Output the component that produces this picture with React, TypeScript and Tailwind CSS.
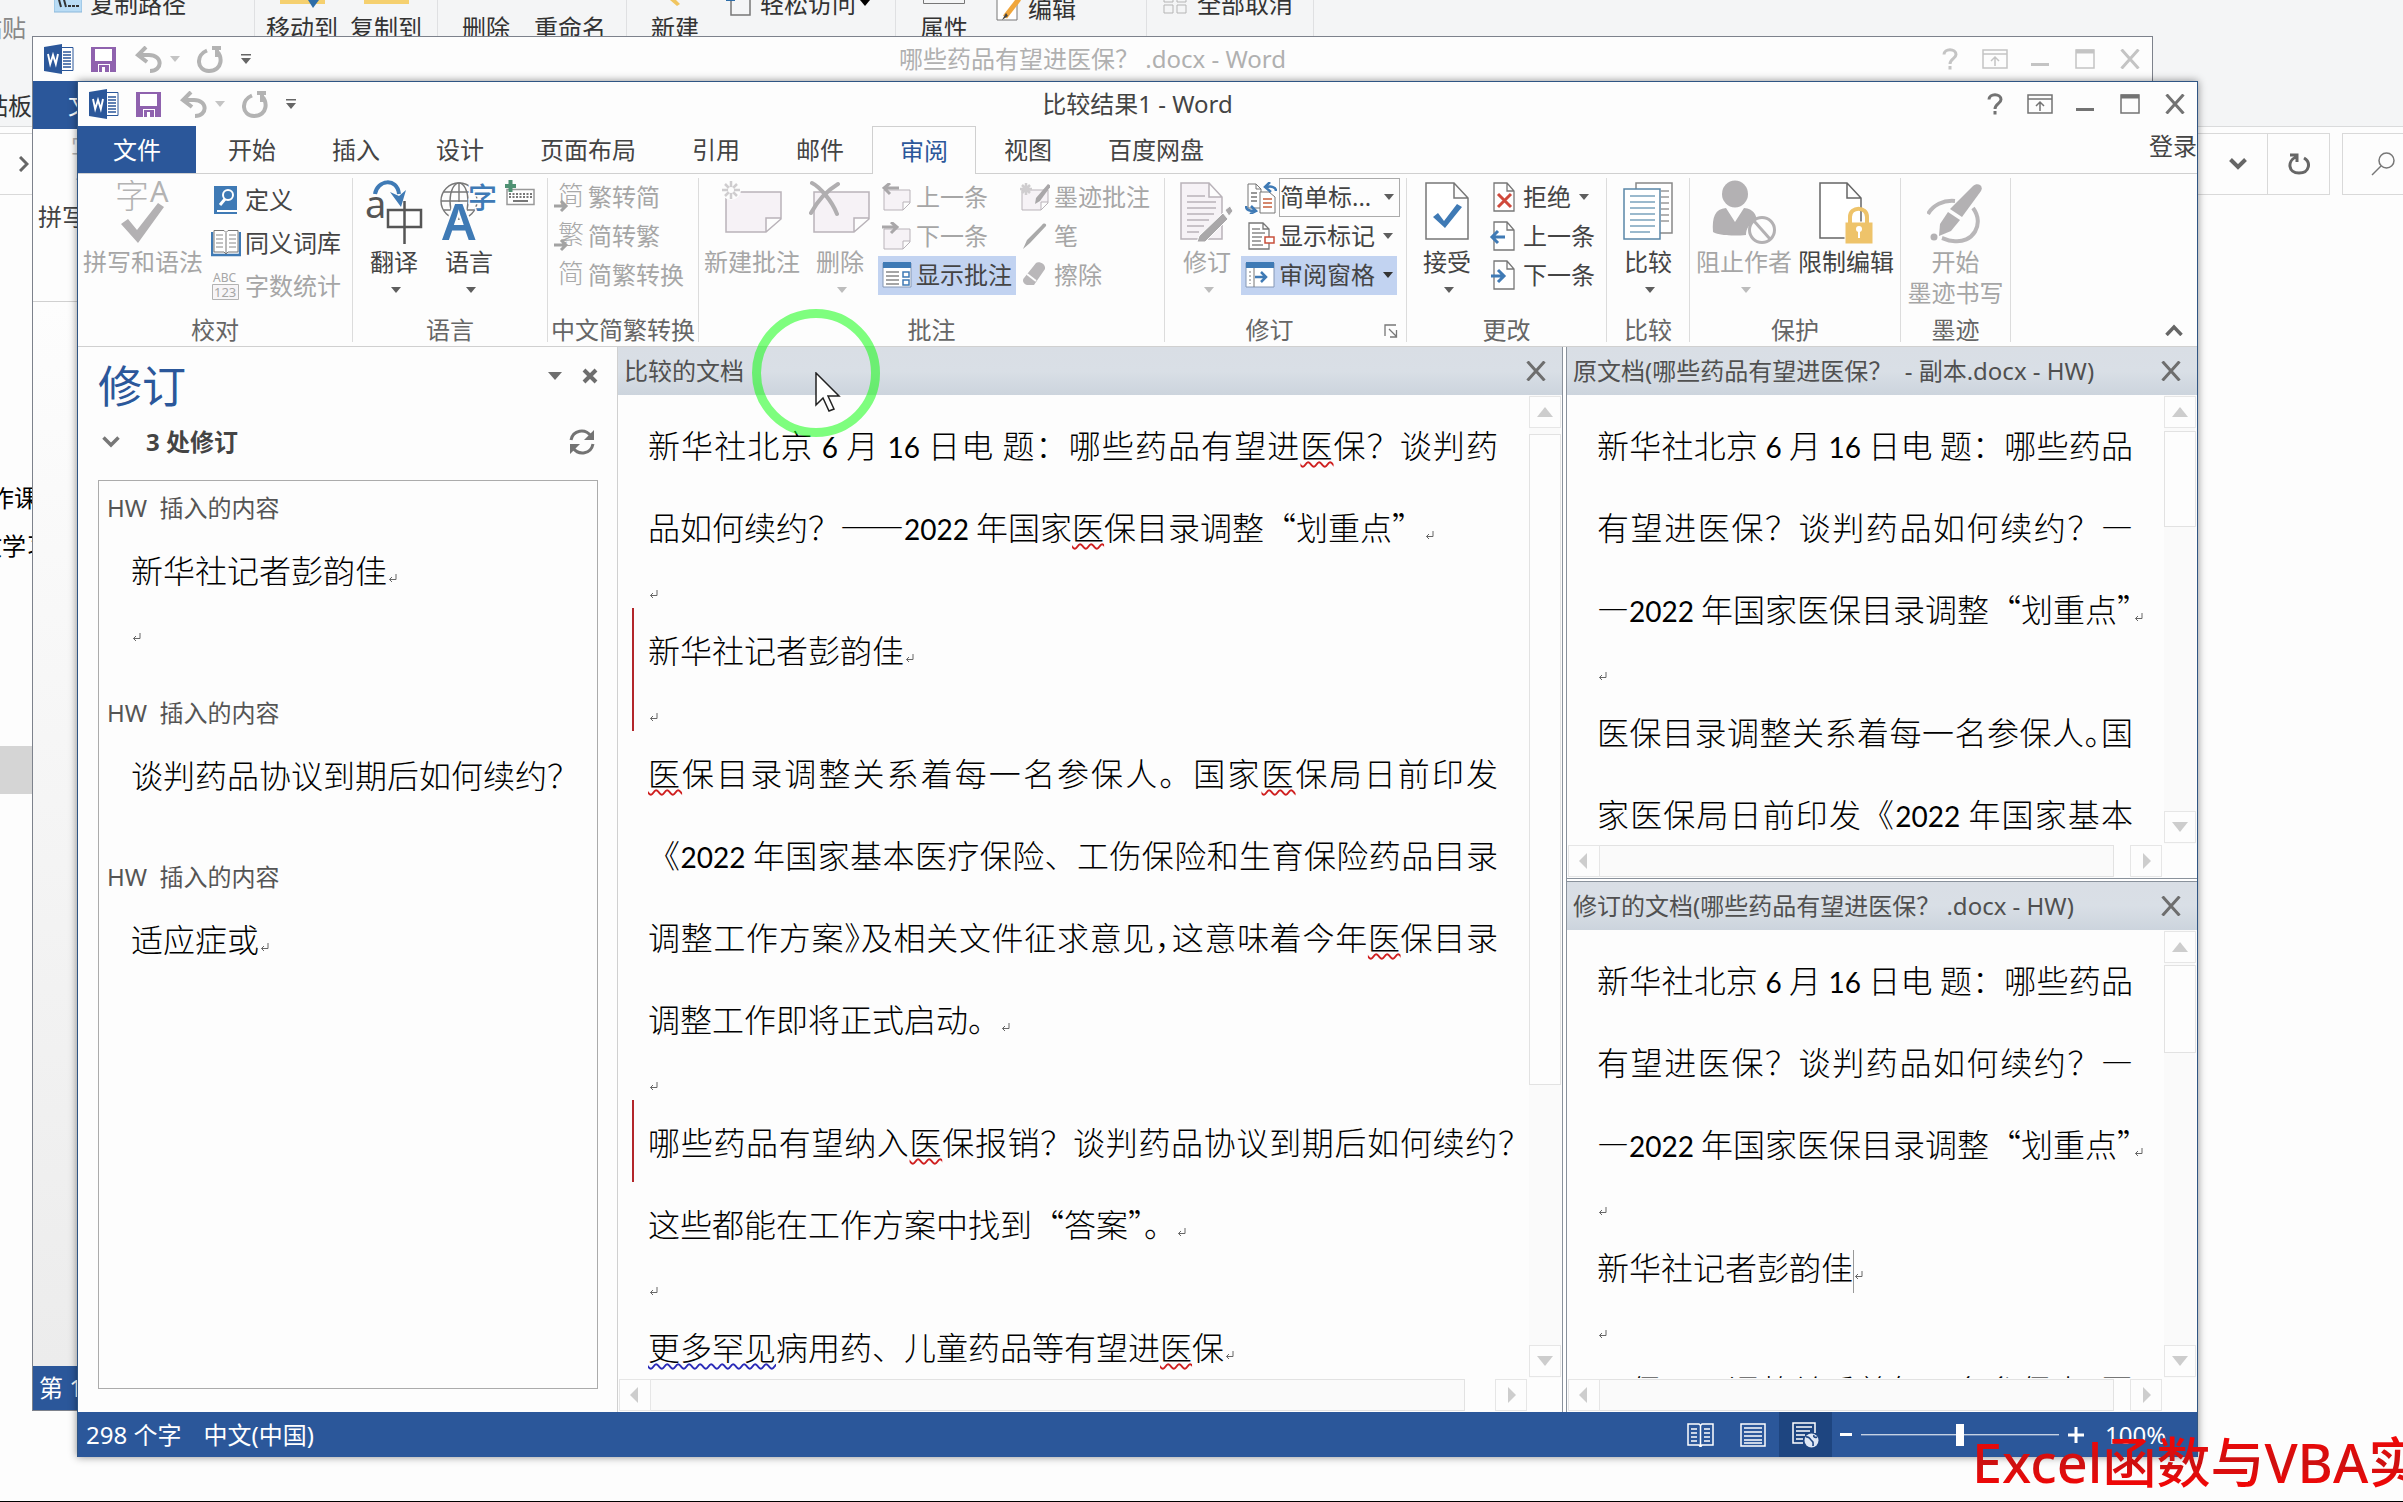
import type { ReactNode } from "react";

const RIBBON_TABS = ["开始", "插入", "设计", "页面布局", "引用", "邮件", "审阅", "视图", "百度网盘"];

/* ---------- small shared glyphs ---------- */

function Caret({ className = "text-[#5e5e5e]" }: { className?: string }) {
  return (
    <svg viewBox="0 0 10 6" className={`h-[6px] w-[10px] shrink-0 ${className}`} fill="currentColor">
      <path d="M0 0h10L5 6z" />
    </svg>
  );
}

function CloseIcon({ className = "" }: { className?: string }) {
  return (
    <svg viewBox="0 0 20 20" className={`h-5 w-5 ${className}`} fill="none" stroke="currentColor" strokeWidth="3">
      <path d="M1.5 0.5l17 19M18.5 0.5l-17 19" />
    </svg>
  );
}

function ParaMark() {
  return (
    <svg viewBox="0 0 9 9" className="ml-px inline h-[9px] w-[9px] align-baseline" fill="none" stroke="#666">
      <path d="M8 0v5.500H1.500M4 3L1.500 5.500L4 8" />
    </svg>
  );
}

/* ---------- title bar ---------- */

function WordLogo() {
  return (
    <svg viewBox="0 0 30 30" className="h-[30px] w-[30px]">
      <path d="M17 3.500h12v23H17z" fill="#fff" stroke="#2b579a" />
      <path d="M19 8h8M19 11h8M19 14h8M19 17h8M19 20h8M19 23h8" stroke="#2b579a" strokeWidth="1.300" />
      <path d="M0 3l18-3v30L0 27z" fill="#2b579a" />
      <path d="M4 10l2.200 10L9 11l2.800 9L14 10" fill="none" stroke="#fff" strokeWidth="1.900" />
    </svg>
  );
}

function QuickAccess() {
  return (
    <div className="flex items-center pl-[11px]">
      <WordLogo />
      <button aria-label="保存" className="ml-[17px]">
        <svg viewBox="0 0 25 25" className="h-[25px] w-[25px]">
          <path d="M0 0h25v25H0z" fill="#8f62ae" />
          <path d="M4 2h17v12H4zM7 17h12v8H7z" fill="#fff" />
          <path d="M8 18h10v7h-4v-5h-3v5H8z" fill="#8f62ae" />
        </svg>
      </button>
      <button aria-label="撤消" className="ml-[19px]">
        <svg viewBox="0 0 27 27" className="h-[27px] w-[27px]" fill="none" stroke="#b3b3b3" strokeWidth="4">
          <path d="M11 1L3 9l9 7M4 9h10c14 0 14 16 1 16" />
        </svg>
      </button>
      <button aria-label="撤消列表" className="ml-2">
        <Caret className="text-[#c4c4c4]" />
      </button>
      <button aria-label="重复" className="ml-[17px]">
        <svg viewBox="0 0 26 27" className="h-[27px] w-[26px]" fill="none" stroke="#b3b3b3" strokeWidth="4">
          <path d="M10 4.500C-1 9-1 24 12 25c14 0 14-16 7-20M15 2h9M20 2v9" />
        </svg>
      </button>
      <button aria-label="自定义快速访问工具栏" className="ml-[18px] text-[#666]">
        <svg viewBox="0 0 10 10" className="h-[10px] w-[10px]" fill="currentColor">
          <path d="M0 0h10v1.500H0zM0 4h10L5 10z" />
        </svg>
      </button>
    </div>
  );
}

function TitleBar({ title, faded = false }: { title: string; faded?: boolean }) {
  return (
    <header className="grid h-[44px] shrink-0 grid-cols-[1fr_auto_1fr] items-center">
      <QuickAccess />
      <h1 className={faded ? "text-[#b0b0b0]" : "text-[#444]"}>{title}</h1>
      <div className={`flex justify-end ${faded ? "text-[#c4c4c4]" : "text-[#737373]"}`}>
        <button aria-label="帮助" className="flex w-[45px] items-center justify-center">
          <svg viewBox="0 0 16 22" className="h-[22px] w-4" fill="none" stroke="currentColor" strokeWidth="3">
            <path d="M2 6.500C2 0 14 0 14 6.500c0 4-6 4.500-6 9.500M8 18v3.500" />
          </svg>
        </button>
        <button aria-label="功能区显示选项" className="flex w-[45px] items-center justify-center">
          <svg viewBox="0 0 26 20" className="h-5 w-[26px]" fill="none" stroke="currentColor" strokeWidth="1.500">
            <path d="M1 1h24v18H1zM1 5h24M13 17V8M9 12l4-4l4 4" />
          </svg>
        </button>
        <button aria-label="最小化" className="flex w-[45px] items-center justify-center">
          <svg viewBox="0 0 18 20" className="h-5 w-[18px]" fill="currentColor">
            <path d="M0 14h18v3H0z" />
          </svg>
        </button>
        <button aria-label="最大化" className="flex w-[45px] items-center justify-center">
          <svg viewBox="0 0 20 20" className="h-5 w-5" fill="none" stroke="currentColor" strokeWidth="1.500">
            <path d="M1 1h18v18H1z" />
            <path d="M1 2.500h18" strokeWidth="4" />
          </svg>
        </button>
        <button aria-label="关闭" className="flex w-[45px] items-center justify-center">
          <CloseIcon />
        </button>
      </div>
    </header>
  );
}

/* ---------- ribbon parts ---------- */

function Group({ label, className, children, launcher = false }: { label: string; className: string; children: ReactNode; launcher?: boolean }) {
  return (
    <section className={`my-1 flex shrink-0 flex-col border-r border-[#dcdcdc] ${className}`}>
      <div className="flex flex-1">{children}</div>
      <div className={`relative h-6 text-center leading-6 text-[#666] ${launcher ? "pr-8" : ""}`}>
        {label}
        {launcher && (
          <button aria-label="修订选项" className="absolute right-2 top-1.5">
            <svg viewBox="0 0 14 14" className="h-[14px] w-[14px]" fill="none" stroke="#777" strokeWidth="1.300">
              <path d="M1 12V1h11M5 5l7 7M12.500 6v7H6" />
            </svg>
          </button>
        )}
      </div>
    </section>
  );
}

function BigButton({ icon, label, second, arrow = false, disabled = false, className = "" }: {
  icon: ReactNode;
  label: string;
  second?: string;
  arrow?: boolean;
  disabled?: boolean;
  className?: string;
}) {
  return (
    <button className={`flex shrink-0 flex-col items-center whitespace-nowrap pt-0.5 leading-[31px] ${disabled ? "text-[#a6a6a6]" : "text-[#444]"} ${className}`}>
      <span className="flex h-[66px] items-start">{icon}</span>
      <span>{label}</span>
      {second && <span>{second}</span>}
      {arrow && (
        <span className="flex h-[26px] items-center pl-1">
          <Caret className={disabled ? "text-[#bdbdbd]" : "text-[#5e5e5e]"} />
        </span>
      )}
    </button>
  );
}

function SmallButton({ icon, label, arrow = false, disabled = false, active = false, tall = false }: {
  icon: ReactNode;
  label: string;
  arrow?: boolean;
  disabled?: boolean;
  active?: boolean;
  tall?: boolean;
}) {
  return (
    <button
      className={`flex items-center whitespace-nowrap px-1 ${tall ? "h-[43px]" : "h-[39px] pb-0.5"} ${active ? "bg-[#c2d3f1]" : ""} ${disabled ? "text-[#a6a6a6]" : "text-[#444]"}`}
    >
      <span className="flex w-[34px] shrink-0 items-center">{icon}</span>
      {label}
      {arrow && (
        <span className="pl-2">
          <Caret className={active ? "text-[#333]" : "text-[#5e5e5e]"} />
        </span>
      )}
    </button>
  );
}

function SpellIcon() {
  return (
    <svg viewBox="0 0 56 64" className="h-16 w-14">
      <text x="0" y="28" fontSize="34" fill="#b3b3b3" fontWeight="300">字</text>
      <text x="35" y="22" fontSize="29" fill="#b3b3b3">A</text>
      <path d="M6 44l7-5l9 11L43 23l6 4L23 63z" fill="#b3b1b3" />
    </svg>
  );
}

function SpellButton() {
  return <BigButton icon={<SpellIcon />} label="拼写和语法" disabled className="ml-[5px] w-[120px]" />;
}

function DefineIcon() {
  return (
    <svg viewBox="0 0 30 28" className="h-7 w-[30px]">
      <path d="M3 0h23v28H3z" fill="#3f7ab5" />
      <path d="M6 24h20v2H6z" fill="#fff" />
      <circle cx="17" cy="9" r="5" fill="none" stroke="#fff" strokeWidth="2" />
      <path d="M14 13l-5 6" stroke="#fff" strokeWidth="3" />
    </svg>
  );
}

function ThesaurusIcon() {
  return (
    <svg viewBox="0 0 30 28" className="h-7 w-[30px]" fill="none">
      <path d="M1 3v23h28V3" stroke="#3f7ab5" strokeWidth="2.500" />
      <path d="M3 1.500h10l2 2l2-2h10V23H17l-2 2l-2-2H3zM15 4v20" fill="#fff" stroke="#777" />
      <path d="M5 6h7M5 10h7M5 14h7M5 18h7M18 6h7M18 10h7M18 14h7M18 18h7" stroke="#888" />
    </svg>
  );
}

function CountIcon() {
  return (
    <svg viewBox="0 0 30 30" className="h-[30px] w-[30px]" fill="#a6a6a6">
      <text x="2" y="11" fontSize="12">ABC</text>
      <path d="M1.500 13.500h26v15h-26z" fill="#f7f5f7" stroke="#b3b3b3" />
      <text x="3" y="26" fontSize="13">123</text>
    </svg>
  );
}

function TranslateIcon() {
  return (
    <svg viewBox="0 0 58 66" className="h-[66px] w-[58px]">
      <text x="0" y="38" fontSize="38" fill="#555">a</text>
      <path d="M10 14C12 0 32-3 34 14" fill="none" stroke="#3f7ab5" strokeWidth="4" />
      <path d="M25 12l9 4l7-6l-5 17z" fill="#3f7ab5" />
      <path d="M23 30h33v17H23zM39.500 21v43" fill="none" stroke="#555" strokeWidth="2.500" />
    </svg>
  );
}

function LanguageIcon() {
  return (
    <svg viewBox="0 0 58 64" className="h-16 w-[58px]">
      <g fill="none" stroke="#777" strokeWidth="1.400">
        <circle cx="19" cy="21" r="18" />
        <ellipse cx="19" cy="21" rx="9" ry="18" />
        <path d="M19 3v36M1 21h36M4 12h30M4 30h30" />
      </g>
      <text x="28" y="29" fontSize="29" fill="#3f7ab5" fontWeight="500" stroke="#fdfdfd" strokeWidth="3" paintOrder="stroke">字</text>
      <text x="2" y="60" fontSize="50" fontWeight="600" fill="#3f7ab5" stroke="#fdfdfd" strokeWidth="4" paintOrder="stroke">A</text>
    </svg>
  );
}

function KeyboardIcon() {
  return (
    <svg viewBox="0 0 30 26" className="h-[26px] w-[30px]" fill="none">
      <path d="M2 9.500h27v15H2z" fill="#fff" stroke="#999" strokeWidth="1.500" />
      <path d="M4 14h24M4 17h24" stroke="#777" strokeWidth="2" strokeDasharray="2 1.500" />
      <path d="M8 21h15" stroke="#777" strokeWidth="2" />
      <path d="M5.500 0v12M0 6h11" stroke="#4f9173" strokeWidth="4" />
    </svg>
  );
}

function ConvertIcon({ char, arrow = true }: { char: string; arrow?: boolean }) {
  return (
    <svg viewBox="0 0 32 32" className="h-8 w-8">
      <text x="4" y="24" fontSize="26" fill="#a9a9a9" fontWeight="300">{char}</text>
      {arrow && <path d="M0 25h11M7 20l5 5l-5 5" fill="none" stroke="#a3a3a3" strokeWidth="3" />}
    </svg>
  );
}

function Burst({ x, y, r }: { x: number; y: number; r: number }) {
  const d = Math.round(r * 0.7);
  return (
    <path
      d={`M${x - r} ${y}h${2 * r}M${x} ${y - r}v${2 * r}M${x - d} ${y - d}l${2 * d} ${2 * d}M${x + d} ${y - d}l${-2 * d} ${2 * d}`}
      stroke="#cfcdcf"
      strokeWidth="2.500"
    />
  );
}

function NewCommentIcon() {
  return (
    <svg viewBox="0 0 62 54" className="h-[54px] w-[62px]" fill="none">
      <path d="M5 12h55v27L45 52H5zM60 38H45v14" fill="#f6f2f6" stroke="#b9b3b9" strokeWidth="1.500" />
      <circle cx="10" cy="10" r="10" fill="#fdfdfd" />
      <Burst x={10} y={10} r={9} />
      <circle cx="10" cy="10" r="3" fill="#fdfdfd" />
    </svg>
  );
}

function DeleteCommentIcon() {
  return (
    <svg viewBox="0 0 62 54" className="h-[54px] w-[62px]" fill="none">
      <path d="M5 12h55v27L45 52H5zM60 38H45v14" fill="#f6f2f6" stroke="#b9b3b9" strokeWidth="1.500" />
      <path d="M3 3c8 4 20 18 25 31M29 4C19 10 9 20 2 33" stroke="#b0aeb0" strokeWidth="4" strokeLinecap="round" />
    </svg>
  );
}

function MiniComment({ children }: { children?: ReactNode }) {
  return (
    <svg viewBox="0 0 30 28" className="h-7 w-[30px]" fill="none">
      <path d="M2 7h26v13l-7 7H2zM28 19h-7v8" fill="#f6f2f6" stroke="#b9b3b9" />
      {children}
    </svg>
  );
}

function PenIcon() {
  return (
    <svg viewBox="0 0 30 28" className="h-7 w-[30px]" fill="#a9a9a9">
      <path d="M22 3c2-3 5-1 4 1L10 21l-7 6l4-9z" />
    </svg>
  );
}

function EraserIcon() {
  return (
    <svg viewBox="0 0 30 28" className="h-7 w-[30px]">
      <path d="M16 2c3-2 10 1 9 6L14 24H7c-4-1-5-5-3-7z" fill="#b9b7b9" />
      <path d="M7 13l9 7" stroke="#fdfdfd" strokeWidth="2" />
    </svg>
  );
}

function ShowCommentsIcon() {
  return (
    <svg viewBox="0 0 30 26" className="h-[26px] w-[30px]" fill="none">
      <path d="M1 1h28v24H1z" fill="#fff" stroke="#8497b5" />
      <path d="M1 0h28v6H1z" fill="#3f7ab5" />
      <path d="M4 10h13M4 14h13M4 18h13M4 22h13" stroke="#888" strokeWidth="1.500" />
      <path d="M21 10h6v5h-6zM21 18h6v5h-6z" stroke="#3f7ab5" strokeWidth="1.500" />
    </svg>
  );
}

function TrackIcon() {
  return (
    <svg viewBox="0 0 54 60" className="mt-0.5 h-[60px] w-[54px]" fill="none">
      <path d="M1 1h28l13 14v42H1zM29 1v14h13" fill="#f6f2f6" stroke="#b9b3b9" strokeWidth="1.500" />
      <path d="M7 14h18M7 20h29M7 26h29M7 32h27M7 38h22M7 44h17M7 50h12" stroke="#b9b3b9" strokeWidth="1.500" />
      <path d="M45 28l5-4l3 5l-4 5zM43 31l5 6l-23 23l-8 0l2-6z" fill="#a9a7a9" stroke="#fdfdfd" />
    </svg>
  );
}

function MarkupIcon() {
  return (
    <svg viewBox="0 0 32 32" className="h-8 w-8" fill="none">
      <path d="M3 2h8l5 5v19H3zM11 2v5h5" fill="#fff" stroke="#777" />
      <path d="M6 11h6M6 15h6M6 19h6" stroke="#777" strokeWidth="1.500" />
      <path d="M15 10h9l6 5v16H15z" fill="#fff" stroke="#777" />
      <path d="M18 17h9M18 21h9M18 25h9" stroke="#c8603c" strokeWidth="1.500" />
      <path d="M31 9c0-4-5-5-9-4M25 0l-5 5l6 5M1 24c0 4 4 5 8 5M6 24l5 5l-6 3" stroke="#3f7ab5" strokeWidth="2.500" />
    </svg>
  );
}

function ShowMarkupIcon() {
  return (
    <svg viewBox="0 0 30 28" className="h-7 w-[30px]" fill="none">
      <path d="M4 1h14l6 6v20H4zM18 1v6h6" fill="#fff" stroke="#777" strokeWidth="1.300" />
      <path d="M7 7h8M7 11h13M7 15h10M7 19h9M7 23h11" stroke="#888" strokeWidth="1.300" />
      <path d="M20 15h9v6h-9z" fill="#fff" stroke="#c8503c" strokeWidth="1.500" />
    </svg>
  );
}

function ReviewPaneIcon() {
  return (
    <svg viewBox="0 0 30 26" className="h-[26px] w-[30px]" fill="none">
      <path d="M1 1h28v24H1z" fill="#fff" stroke="#8497b5" />
      <path d="M1 0h28v6H1z" fill="#3f7ab5" />
      <path d="M9 6v19" stroke="#777" />
      <path d="M5 9v13" stroke="#bbb" strokeWidth="2" strokeDasharray="2 2" />
      <path d="M10 15h11M16 10l5 5l-5 5" stroke="#3f7ab5" strokeWidth="2.500" />
    </svg>
  );
}

function AcceptIcon() {
  return (
    <svg viewBox="0 0 44 60" className="mt-0.5 h-[60px] w-11" fill="none">
      <path d="M1 1h28l14 15v41H1zM29 1v15h14" fill="#fff" stroke="#777" strokeWidth="1.500" />
      <path d="M8 35l5-4l6 8L32 22l5 3L20 46z" fill="#3f7ab5" />
    </svg>
  );
}

function MiniPage({ children }: { children: ReactNode }) {
  return (
    <svg viewBox="0 0 28 30" className="h-[30px] w-7" fill="none">
      <path d="M5 1h13l7 8v20H5zM18 1v8h7" fill="#fff" stroke="#777" strokeWidth="1.300" />
      {children}
    </svg>
  );
}

function CompareIcon() {
  return (
    <svg viewBox="0 0 50 58" className="mt-0.5 h-[58px] w-[50px]" fill="none">
      <path d="M13 1h36v50H13z" fill="#fff" stroke="#888" strokeWidth="1.500" />
      <path d="M38 9h8M38 15h8M38 21h8M38 27h8M38 33h8M38 39h8" stroke="#999" strokeWidth="1.500" />
      <path d="M1 7h36v50H1z" fill="#fff" stroke="#5a87a8" strokeWidth="1.500" />
      <path d="M7 14h25M7 20h25M7 26h25M7 32h25M7 38h25M7 44h25M7 50h20" stroke="#7aa3bd" strokeWidth="1.500" />
    </svg>
  );
}

function BlockAuthorsIcon() {
  return (
    <svg viewBox="0 0 64 64" className="h-16 w-16" fill="none">
      <ellipse cx="23" cy="14" rx="13" ry="13.500" fill="#b3b1b3" />
      <path d="M1 52c-1-15 2-23 13-24l9 14l9-14c10 1 12 7 13 12c-8 3-11 9-11 15c-10 1-26 1-33-3z" fill="#b3b1b3" />
      <circle cx="50" cy="50" r="12.500" fill="#fdfdfd" stroke="#b3b1b3" strokeWidth="3" />
      <path d="M42 41l16 18" stroke="#b3b1b3" strokeWidth="3" />
    </svg>
  );
}

function RestrictIcon() {
  return (
    <svg viewBox="0 0 54 62" className="mt-0.5 h-[62px] w-[54px]" fill="none">
      <path d="M1 1h27l14 15v40H1zM28 1v15h14" fill="#fff" stroke="#666" strokeWidth="1.500" />
      <path d="M26 40h28v22H26z" fill="#eec36a" stroke="#fdfdfd" />
      <path d="M31 41V35c0-11 17-11 17 0v6" stroke="#eec36a" strokeWidth="4" />
      <circle cx="40" cy="47" r="3" fill="#fff" />
      <path d="M40 48v8" stroke="#fff" strokeWidth="2" />
    </svg>
  );
}

function InkIcon() {
  return (
    <svg viewBox="0 0 58 60" className="mt-1 h-[60px] w-[58px]" fill="none">
      <path d="M1 30c5-9 15-14 27-13M46 24c12 16 0 36-20 33c-5 0-8-2-11-3" stroke="#b9b7b9" strokeWidth="4" />
      <path d="M46 2c4-4 11-1 8 5L35 33l-12-8z" fill="#b3b1b3" />
      <path d="M21 28l12 8l-9 11l-12 5l1-12z" fill="#b3b1b3" />
      <circle cx="7" cy="53" r="3.500" fill="#b3b1b3" />
    </svg>
  );
}

function Ribbon() {
  return (
    <div className="flex h-[173px] shrink-0 border-b border-[#d0d0d0]">
      <Group label="校对" className="w-[275px]">
        <SpellButton />
        <div className="ml-1">
          <SmallButton tall icon={<DefineIcon />} label="定义" />
          <SmallButton tall icon={<ThesaurusIcon />} label="同义词库" />
          <SmallButton tall disabled icon={<CountIcon />} label="字数统计" />
        </div>
      </Group>
      <Group label="语言" className="w-[195px]">
        <BigButton icon={<TranslateIcon />} label="翻译" arrow className="ml-1.5 w-[70px]" />
        <BigButton icon={<LanguageIcon />} label="语言" arrow className="ml-1 w-[72px]" />
        <button aria-label="更新输入法词典" className="mt-0.5 self-start">
          <KeyboardIcon />
        </button>
      </Group>
      <Group label="中文简繁转换" className="w-[151px]">
        <div className="ml-0.5">
          <SmallButton disabled icon={<ConvertIcon char="简" />} label="繁转简" />
          <SmallButton disabled icon={<ConvertIcon char="繁" />} label="简转繁" />
          <SmallButton disabled icon={<ConvertIcon char="简" arrow={false} />} label="简繁转换" />
        </div>
      </Group>
      <Group label="批注" className="w-[466px]">
        <BigButton icon={<NewCommentIcon />} label="新建批注" disabled className="ml-[5px] w-[96px]" />
        <BigButton icon={<DeleteCommentIcon />} label="删除" arrow disabled className="ml-1.5 w-[68px]" />
        <div className="ml-1">
          <SmallButton disabled icon={<MiniComment><path d="M17 5H2M8 0L2 5l6 6" stroke="#a9a7a9" strokeWidth="3" /></MiniComment>} label="上一条" />
          <SmallButton disabled icon={<MiniComment><path d="M0 5h15M9 0l6 5l-6 6" stroke="#a9a7a9" strokeWidth="3" /></MiniComment>} label="下一条" />
          <SmallButton active icon={<ShowCommentsIcon />} label="显示批注" />
        </div>
        <div>
          <SmallButton
            disabled
            icon={
              <MiniComment>
                <Burst x={6} y={6} r={6} />
                <path d="M28 1l3 2L20 18l-5 3l1-6z" fill="#a9a7a9" />
              </MiniComment>
            }
            label="墨迹批注"
          />
          <SmallButton disabled icon={<PenIcon />} label="笔" />
          <SmallButton disabled icon={<EraserIcon />} label="擦除" />
        </div>
      </Group>
      <Group label="修订" className="w-[242px]" launcher>
        <BigButton icon={<TrackIcon />} label="修订" arrow disabled className="ml-2.5 w-[60px] pl-1" />
        <div className="ml-1.5">
          <div className="flex items-center pl-1">
            <label htmlFor="markup" className="w-[34px]" aria-label="显示以供审阅">
              <MarkupIcon />
            </label>
            <div className="relative">
              <select id="markup" className="h-[39px] w-[121px] appearance-none border border-[#ababab] bg-[#fdfdfd] pb-0.5 text-[#444]">
                <option>简单标...</option>
              </select>
              <span className="pointer-events-none absolute right-1.5 top-4">
                <Caret />
              </span>
            </div>
          </div>
          <SmallButton arrow icon={<ShowMarkupIcon />} label="显示标记" />
          <SmallButton arrow active icon={<ReviewPaneIcon />} label="审阅窗格" />
        </div>
      </Group>
      <Group label="更改" className="w-[200px]">
        <BigButton icon={<AcceptIcon />} label="接受" arrow className="ml-2.5 w-[60px]" />
        <div className="ml-2">
          <SmallButton arrow icon={<MiniPage><path d="M9 12l13 13M22 12L9 25" stroke="#d0493c" strokeWidth="3" /></MiniPage>} label="拒绝" />
          <SmallButton icon={<MiniPage><path d="M16 16H3M9 10l-6 6l6 6" stroke="#3f7ab5" strokeWidth="3" /></MiniPage>} label="上一条" />
          <SmallButton icon={<MiniPage><path d="M2 16h12M9 10l6 6l-6 6" stroke="#3f7ab5" strokeWidth="3" /></MiniPage>} label="下一条" />
        </div>
      </Group>
      <Group label="比较" className="w-[83px]">
        <BigButton icon={<CompareIcon />} label="比较" arrow className="mx-auto w-[60px]" />
      </Group>
      <Group label="保护" className="w-[211px]">
        <BigButton icon={<BlockAuthorsIcon />} label="阻止作者" arrow disabled className="ml-1.5 w-[96px]" />
        <BigButton icon={<RestrictIcon />} label="限制编辑" className="ml-1.5 w-[96px]" />
      </Group>
      <Group label="墨迹" className="w-[110px]">
        <BigButton icon={<InkIcon />} label="开始" second="墨迹书写" disabled className="mx-auto w-[96px]" />
      </Group>
      <button aria-label="折叠功能区" className="mb-2.5 ml-auto mr-3.5 self-end">
        <svg viewBox="0 0 18 12" className="h-3 w-[18px]" fill="none" stroke="#666" strokeWidth="3.500">
          <path d="M1.500 11L9 3l7.500 8" />
        </svg>
      </button>
    </div>
  );
}

function TabStrip() {
  return (
    <nav className="flex h-[48px] shrink-0 items-stretch border-b border-[#d0d0d0] text-[#444]">
      <button className="w-[118px] bg-[#2b579a] text-white">文件</button>
      <div className="ml-1 flex">
        {RIBBON_TABS.map((tab) => (
          <button
            key={tab}
            className={
              tab === "审阅"
                ? "-mb-px border border-b-0 border-[#d0d0d0] bg-[#fdfdfd] px-[27px] text-[#2b579a]"
                : "px-7"
            }
          >
            {tab}
          </button>
        ))}
      </div>
      <a href="#login" className="ml-auto mt-1 self-start leading-8">登录</a>
    </nav>
  );
}

/* ---------- document panes ---------- */

const HALF = "[font-feature-settings:'halt']";

function Num({ children }: { children: string }) {
  return <span className="font-['Lato'] text-[28px] font-normal leading-none">{children}</span>;
}

function Typo({ children, grammar = false }: { children: string; grammar?: boolean }) {
  return (
    <span
      className={`underline decoration-wavy decoration-2 underline-offset-[3px] [text-decoration-skip-ink:none] ${grammar ? "decoration-[#2a2ab8]" : "decoration-[#cf1f1f]"}`}
    >
      {children}
    </span>
  );
}

// A full line of a justified paragraph
function Line({ children, className = "" }: { children: ReactNode; className?: string }) {
  return <span className={`block whitespace-nowrap text-justify [text-align-last:justify] ${className}`}>{children}</span>;
}

function EndLine({ children }: { children: ReactNode }) {
  return (
    <span className="block whitespace-nowrap">
      {children}
      <ParaMark />
    </span>
  );
}

function Blank() {
  return (
    <p className="h-[41px] leading-[37px]">
      <ParaMark />
    </p>
  );
}

function ScrollButton({ d, label }: { d: string; label: string }) {
  return (
    <button aria-label={label} className="flex h-8 w-8 shrink-0 items-center justify-center border border-[#e6e6e6] bg-[#fdfdfd]">
      <svg viewBox="0 0 18 18" className="h-[18px] w-[18px]" fill="#cdcdcd">
        <path d={d} />
      </svg>
    </button>
  );
}

function VScroll({ thumb }: { thumb: string }) {
  return (
    <div className="mr-px flex w-8 shrink-0 flex-col bg-[#fafafa] py-px">
      <ScrollButton d="M9 4l8 10H1z" label="向上滚动" />
      <div className="flex-1">
        <div className={`border border-[#e2e2e2] bg-[#fdfdfd] ${thumb}`} />
      </div>
      <ScrollButton d="M9 14L1 4h16z" label="向下滚动" />
    </div>
  );
}

function HScroll({ gap }: { gap: string }) {
  return (
    <div className="flex h-[34px] shrink-0 items-center pl-px pr-[35px]">
      <ScrollButton d="M4 9l8-8v16z" label="向左滚动" />
      <div className={`h-8 flex-1 ${gap}`}>
        <div className="h-8 border border-l-0 border-[#e2e2e2] bg-[#fafafa]" />
      </div>
      <ScrollButton d="M14 9L6 1v16z" label="向右滚动" />
    </div>
  );
}

function DocPane({ title, thumb, textClass, className = "", gap = "pr-4", children }: {
  title: string;
  thumb: string;
  textClass: string;
  className?: string;
  gap?: string;
  children: ReactNode;
}) {
  return (
    <section className={`flex min-h-0 min-w-0 flex-col ${className}`}>
      <header className="flex h-[48px] shrink-0 items-center justify-between bg-linear-to-b from-[#d9dee5] via-[#d9dfe6] to-[#ccd4dd] pl-[6px] pr-4 text-[#505050]">
        <h2 className="whitespace-pre">{title}</h2>
        <button aria-label="关闭窗格" className="text-[#6e6e6e]">
          <CloseIcon />
        </button>
      </header>
      <div className="flex min-h-0 flex-1">
        <div className={`min-w-0 flex-1 overflow-hidden pt-2 font-['Noto_Sans_CJK_SC',sans-serif] text-[32px] font-light leading-[82px] text-black ${textClass}`}>
          {children}
        </div>
        <VScroll thumb={thumb} />
      </div>
      <HScroll gap={gap} />
    </section>
  );
}

function SideHeadline() {
  return (
    <p>
      <Line>
        新华社北京 <Num>6</Num> 月 <Num>16</Num> 日电 题：哪些药品
      </Line>
      <Line>有望进医保？谈判药品如何续约？—</Line>
      <EndLine>
        —<Num>2022</Num> 年国家医保目录调整“划重点<span className={HALF}>”</span>
      </EndLine>
    </p>
  );
}

function ComparedDoc() {
  return (
    <DocPane title="比较的文档" className="flex-1" thumb="mt-1.5 h-[71%]" textClass="pl-[30px] pr-[31px]" gap="pr-[30px]">
      <p>
        <Line>
          新华社北京 <Num>6</Num> 月 <Num>16</Num> 日电 题：哪些药品有望进<Typo>医</Typo>保？谈判药
        </Line>
        <EndLine>
          品如何续约？——<Num>2022</Num> 年国家<Typo>医</Typo>保目录调整“划重点”
        </EndLine>
      </p>
      <Blank />
      <div className="-ml-4 border-l-2 border-[#b3262a] pl-[14px]">
        <p>
          <EndLine>新华社记者彭韵佳</EndLine>
        </p>
        <Blank />
      </div>
      <p>
        <Line>
          <Typo>医</Typo>保目录调整关系着每一名参保人。国家<Typo>医</Typo>保局日前印发
        </Line>
        <Line>
          《<Num>2022</Num> 年国家基本医疗保险、工伤保险和生育保险药品目录
        </Line>
        <Line>
          调整工作方案<span className={HALF}>》</span>及相关文件征求意见<span className={HALF}>，</span>这意味着今年<Typo>医</Typo>保目录
        </Line>
        <EndLine>调整工作即将正式启动。</EndLine>
      </p>
      <Blank />
      <p>
        <Line className="-ml-4 -mr-8 border-l-2 border-[#b3262a] pl-[14px]">
          哪些药品有望纳入<Typo>医</Typo>保报销？谈判药品协议到期后如何续约？
        </Line>
        <EndLine>
          这些都能在工作方案中找到“答案<span className={HALF}>”</span>。
        </EndLine>
      </p>
      <Blank />
      <p>
        <EndLine>
          <Typo grammar>更多罕见</Typo>病用药、儿童药品等有望进<Typo>医</Typo>保
        </EndLine>
      </p>
    </DocPane>
  );
}

function OriginalDoc() {
  return (
    <DocPane title="原文档(哪些药品有望进医保？  - 副本.docx - HW)" className="h-[531px]" thumb="mt-[3px] h-[25%]" textClass="pl-[30px] pr-[31px]">
      <SideHeadline />
      <Blank />
      <p>
        <Line>
          医保目录调整关系着每一名参保人<span className={HALF}>。</span>国
        </Line>
        <Line>
          家医保局日前印发《<Num>2022</Num> 年国家基本
        </Line>
      </p>
    </DocPane>
  );
}

function RevisedDoc() {
  return (
    <DocPane title="修订的文档(哪些药品有望进医保？ .docx - HW)" className="flex-1" thumb="mt-0.5 h-[23%]" textClass="pl-[30px] pr-[31px]">
      <SideHeadline />
      <Blank />
      <p className="whitespace-nowrap">
        新华社记者彭韵佳
        <span className="-mr-px inline-block h-[43px] w-px bg-[#999] align-middle" />
        <ParaMark />
      </p>
      <Blank />
      <p>
        <Line>
          医保目录调整关系着每一名参保人<span className={HALF}>。</span>国
        </Line>
      </p>
    </DocPane>
  );
}

/* ---------- revisions pane ---------- */

function Revision({ children }: { children: ReactNode }) {
  return (
    <li className="pb-[41px]">
      <h3 className="whitespace-pre pl-2 leading-[41px] text-[#555]">HW  插入的内容</h3>
      <div className="ml-8 mr-[34px] overflow-hidden whitespace-nowrap font-['Noto_Sans_CJK_SC',sans-serif] text-[32px] font-light leading-[82px] text-black">
        {children}
      </div>
    </li>
  );
}

function RevisionsPane() {
  return (
    <aside className="flex w-[540px] shrink-0 flex-col border-r border-[#d0d0d0] pl-5 pr-[19px]">
      <div className="flex h-[77px] shrink-0 items-center">
        <h2 className="text-[44px] leading-[60px] text-[#2b579a]">修订</h2>
        <div className="ml-auto flex h-[58px] items-center gap-5 self-start text-[#6e6e6e]">
          <button aria-label="任务窗格选项">
            <svg viewBox="0 0 14 8" className="h-2 w-[14px]" fill="currentColor">
              <path d="M0 0h14L7 8z" />
            </svg>
          </button>
          <button aria-label="关闭任务窗格">
            <svg viewBox="0 0 16 16" className="h-4 w-4" fill="none" stroke="currentColor" strokeWidth="4">
              <path d="M2 2l12 12M14 2L2 14" />
            </svg>
          </button>
        </div>
      </div>
      <div className="flex h-9 shrink-0 items-center">
        <button aria-label="折叠摘要" className="ml-1">
          <svg viewBox="0 0 18 12" className="h-3 w-[18px]" fill="none" stroke="#777" strokeWidth="3.500">
            <path d="M1.500 1.500L9 9l7.500-7.500" />
          </svg>
        </button>
        <span className="ml-[26px] font-bold text-[#444]">3 处修订</span>
        <button aria-label="更新修订数量" className="ml-auto mr-[3px]">
          <svg viewBox="0 0 26 26" className="h-[26px] w-[26px]" fill="none" stroke="#737373" strokeWidth="3">
            <path d="M2 11C4 1 16-1 22 7M24 15C22 25 10 27 4 19" />
            <path d="M25 1v10H15l4-4zM1 25V15h10l-4 4z" fill="#737373" stroke="none" />
          </svg>
        </button>
      </div>
      <ul className="mb-[23px] mt-5 flex-1 border border-[#ababab] pt-[6px]">
        <Revision>
          <EndLine>新华社记者彭韵佳</EndLine>
          <Blank />
        </Revision>
        <Revision>谈判药品协议到期后如何续约？</Revision>
        <Revision>
          <EndLine>适应症或</EndLine>
        </Revision>
      </ul>
    </aside>
  );
}

/* ---------- status bar ---------- */

function StatusBar() {
  return (
    <footer className="flex h-[45px] shrink-0 items-center bg-[#2b579a] pl-2 text-white">
      <span>298 个字</span>
      <span className="ml-[22px]">中文(中国)</span>
      <div className="ml-auto flex h-full items-center">
        <button aria-label="阅读视图" className="px-[13px]">
          <svg viewBox="0 0 27 24" className="h-6 w-[27px]" fill="none" stroke="#fff" strokeWidth="1.500">
            <path d="M1 1h11l1.500 1.500L15 1h11v21H15l-1.500 2L12 22H1zM13.500 3v20M4 6h6M4 10h6M4 14h6M4 18h6M17 6h6M17 10h6M17 14h6M17 18h6" />
          </svg>
        </button>
        <button aria-label="页面视图" className="px-[13px]">
          <svg viewBox="0 0 26 24" className="h-6 w-[26px]" fill="none" stroke="#fff" strokeWidth="1.500">
            <path d="M1 1h24v22H1zM4 5h18M4 9h18M4 13h18M4 17h18M4 20h18" />
          </svg>
        </button>
        <button aria-label="Web 版式视图" className="h-full bg-[#1e4580] px-[13px]">
          <svg viewBox="0 0 27 26" className="h-[26px] w-[27px]" fill="none" stroke="#fff" strokeWidth="1.500">
            <path d="M11 21H1V1h22v10M4 5h16M4 9h14M4 13h9M4 17h7" />
            <circle cx="19.500" cy="18.500" r="7" fill="#dfe8f5" stroke="none" />
            <path d="M14 15c4-1 4 3 6 4s1 3 1 5M22 13c-1 2 1 3 3 2" stroke="#1e4580" strokeWidth="1.600" />
          </svg>
        </button>
        <button aria-label="缩小" className="ml-2 h-[3px] w-3 bg-white" />
        <input
          type="range"
          aria-label="显示比例"
          min={0}
          max={200}
          defaultValue={100}
          className="mx-[9px] h-[22px] w-[198px] appearance-none bg-linear-to-b from-transparent from-[45%] via-white via-[45%] to-transparent to-[55%] bg-[length:100%_100%] [&::-webkit-slider-thumb]:h-[22px] [&::-webkit-slider-thumb]:w-2 [&::-webkit-slider-thumb]:appearance-none [&::-webkit-slider-thumb]:bg-white"
        />
        <button aria-label="放大">
          <svg viewBox="0 0 16 16" className="h-4 w-4" stroke="#fff" strokeWidth="3">
            <path d="M8 0v16M0 8h16" />
          </svg>
        </button>
        <span className="ml-[21px] mr-8 w-[60px]">100%</span>
      </div>
    </footer>
  );
}

/* ---------- windows behind ---------- */

function BackCommand({ label, className = "", children }: { label: string; className?: string; children?: ReactNode }) {
  return (
    <button className={`flex shrink-0 flex-col items-center self-start whitespace-nowrap ${className}`}>
      <span className="flex h-4 items-start">{children}</span>
      <span className="leading-6">{label}</span>
    </button>
  );
}

function BackSmall({ label, className = "", children }: { label: string; className?: string; children?: ReactNode }) {
  return (
    <button className={`-mt-2 flex h-6 shrink-0 items-center whitespace-nowrap leading-6 ${className}`}>
      {children}
      {label}
    </button>
  );
}

function FolderIcon({ arrow }: { arrow: boolean }) {
  return (
    <svg viewBox="0 0 45 8" className="h-2 w-[45px]">
      <path d="M0 0h45v4H0z" fill="#f5d06f" />
      {arrow && <path d="M28 0h11l-6 8z" fill="#2d6da8" />}
    </svg>
  );
}

function Explorer() {
  return (
    <div className="absolute inset-0 overflow-hidden text-[#333]">
      <div className="flex h-[127px] border-b border-[#dadbdc] bg-[#f4f5f6]">
        <div className="flex w-[255px] shrink-0 flex-col border-r border-[#dfe0e2]">
          <div className="flex">
            <BackCommand label="粘贴" className="-ml-[22px] text-[#888]" />
            <BackSmall label="复制路径" className="ml-7">
              <svg viewBox="0 0 28 24" className="mr-2 h-6 w-7">
                <path d="M0 0h28v20H0z" fill="#b9dcf5" stroke="#8ab8da" />
                <path d="M4 4l3 11M9 4l3 11M14 14h3M18 14h3M22 14h3" stroke="#333" strokeWidth="2" />
              </svg>
            </BackSmall>
          </div>
          <span className="-ml-10 mt-[52px] leading-7">剪贴板</span>
        </div>
        <div className="flex w-[183px] shrink-0 gap-3 border-r border-[#dfe0e2] pl-[11px]">
          <BackCommand label="移动到"><FolderIcon arrow /></BackCommand>
          <BackCommand label="复制到"><FolderIcon arrow={false} /></BackCommand>
        </div>
        <div className="flex w-[189px] shrink-0 gap-6 border-r border-[#dfe0e2] pl-6">
          <BackCommand label="删除" />
          <BackCommand label="重命名" />
        </div>
        <div className="flex w-[269px] shrink-0 items-start border-r border-[#dfe0e2] pl-6">
          <BackCommand label="新建">
            <svg viewBox="0 0 10 6" className="h-1.5 w-[10px]"><path d="M0 0h6l4 4l-3 2z" fill="#f0c560" /></svg>
          </BackCommand>
          <BackSmall label="轻松访问" className="ml-[27px]">
            <svg viewBox="0 0 26 24" className="mr-2 h-6 w-[26px]" fill="none">
              <path d="M5 0v23h19V0" stroke="#777" strokeWidth="1.500" />
              <path d="M0 8h9" stroke="#2d6da8" strokeWidth="2" />
            </svg>
          </BackSmall>
          <Caret className="ml-1 text-black" />
        </div>
        <div className="flex w-[251px] shrink-0 items-start border-r border-[#dfe0e2] pl-6">
          <BackCommand label="属性">
            <svg viewBox="0 0 42 4" className="h-1 w-[42px]" fill="none"><path d="M.5 0v3.500h41V0" stroke="#777" /></svg>
          </BackCommand>
          <BackSmall label="编辑" className="ml-7 mt-[-3px]">
            <svg viewBox="0 0 26 24" className="mr-1.5 h-6 w-[26px]" fill="none">
              <path d="M1 1h20v22H1z" fill="#fff" stroke="#777" />
              <path d="M23 2L9 20" stroke="#f0a63c" strokeWidth="5" />
              <path d="M10 16l-4 7l6-4z" fill="#444" />
            </svg>
          </BackSmall>
        </div>
        <div className="w-[167px] shrink-0 border-r border-[#dfe0e2] pl-4">
          <BackSmall label="全部取消">
            <svg viewBox="0 0 24 20" className="mr-2.5 h-5 w-6" fill="none" stroke="#b5b5b5">
              <path d="M1 0h9v8H1zM14 0h9v8h-9zM1 11h9v8H1zM14 11h9v8h-9z" />
            </svg>
          </BackSmall>
        </div>
      </div>

      <div className="flex pt-1.5">
        <div className="flex h-[62px] flex-1 items-center justify-between border border-l-0 border-[#d9d9d9] pl-[19px]">
          <svg viewBox="0 0 10 16" className="h-4 w-[10px]" fill="none" stroke="#666" strokeWidth="3"><path d="M1 1l7 7l-7 7" /></svg>
          <button aria-label="历史记录" className="mr-5">
            <svg viewBox="0 0 18 12" className="h-3 w-[18px]" fill="none" stroke="#666" strokeWidth="4"><path d="M1.500 1.500L9 9l7.500-7.500" /></svg>
          </button>
        </div>
        <button aria-label="刷新" className="flex h-[62px] w-[62px] items-center justify-center border border-l-0 border-[#d9d9d9]">
          <svg viewBox="0 0 22 22" className="h-[22px] w-[22px]" fill="none" stroke="#666" strokeWidth="3">
            <path d="M8 4C-1 8 0 20 11 20s12-11 5-15M2 2h7v7" />
          </svg>
        </button>
        <div className="ml-3 flex h-[62px] w-[61px] items-center justify-center border border-r-0 border-[#d9d9d9] pl-5">
          <svg viewBox="0 0 24 24" className="h-6 w-6" fill="none" stroke="#777" strokeWidth="1.500">
            <circle cx="15.500" cy="8.500" r="7.500" />
            <path d="M10 14l-9 9" />
          </svg>
        </div>
      </div>

      {/* navigation tree, mostly hidden by the windows on top */}
      <ul className="-ml-[10px] mt-[279px] w-16 whitespace-nowrap leading-[48px] text-black">
        <li>作课</li>
        <li className="-ml-3">教学习</li>
        <li className="mt-[176px] h-12 bg-[#d5d5d5]" />
      </ul>
    </div>
  );
}

function BackWordWindow() {
  return (
    <div className="absolute bottom-[90px] left-[32px] right-[250px] top-[36px] flex flex-col overflow-hidden border border-[#7d828c] bg-[#fdfdfd]">
      <TitleBar title="哪些药品有望进医保？ .docx - Word" faded />
      <div className="flex h-[48px] shrink-0">
        <button className="w-[118px] bg-[#2b579a] text-white">文件</button>
      </div>
      <div className="flex h-[173px] shrink-0 border-b border-[#d0d0d0] pt-1 [&_button]:text-[#444]">
        <SpellButton />
      </div>
      <div className="flex-1 bg-linear-to-b from-[#fdfdfd] to-[#ececec]" />
      <footer className="flex h-11 shrink-0 items-center bg-[#2b579a] pl-1.5 text-white">第 1 页</footer>
    </div>
  );
}

function WordWindow() {
  return (
    <main className="absolute bottom-[44px] left-[77px] right-[205px] top-[81px] flex flex-col border border-b-0 border-[#2f5584] bg-[#fdfdfd] shadow-[0_0_8px_rgba(0,0,0,0.45)]">
      <TitleBar title="比较结果1 - Word" />
      <TabStrip />
      <Ribbon />
      <div className="flex min-h-0 flex-1">
        <RevisionsPane />
        <ComparedDoc />
        <div className="w-[5px] shrink-0 border-x border-[#8a929c] bg-white" />
        <div className="flex w-[630px] shrink-0 flex-col">
          <OriginalDoc />
          <div className="h-1 shrink-0 border-y border-[#8a929c] bg-white" />
          <RevisedDoc />
        </div>
      </div>
      <StatusBar />
    </main>
  );
}

export default function App() {
  return (
    <div
      lang="zh-CN"
      className="relative h-screen overflow-hidden border-b border-black bg-[#fdfdfd] font-['Noto_Sans','Noto_Sans_CJK_SC',sans-serif] text-[24px] leading-8"
    >
      <Explorer />
      <BackWordWindow />
      <WordWindow />

      {/* click highlight and pointer */}
      <div className="pointer-events-none absolute left-[752px] top-[309px] h-32 w-32 rounded-full border-[9px] border-[#00ff00]/50" />
      <svg viewBox="0 0 26 40" className="pointer-events-none absolute left-[815px] top-[372px] h-10 w-[26px]">
        <path d="M1 1v32l7-7l6 13l5-2l-6-13h11z" fill="#fff" stroke="#222" strokeWidth="1.500" />
      </svg>

      <p className="pointer-events-none absolute left-[1972px] top-[1430px] whitespace-nowrap bg-linear-to-b from-[#ff0000] via-[#cc1010] to-[#ff0000] bg-clip-text text-[54px] font-medium leading-[64px] text-transparent">
        Excel函数与VBA实
      </p>
    </div>
  );
}
